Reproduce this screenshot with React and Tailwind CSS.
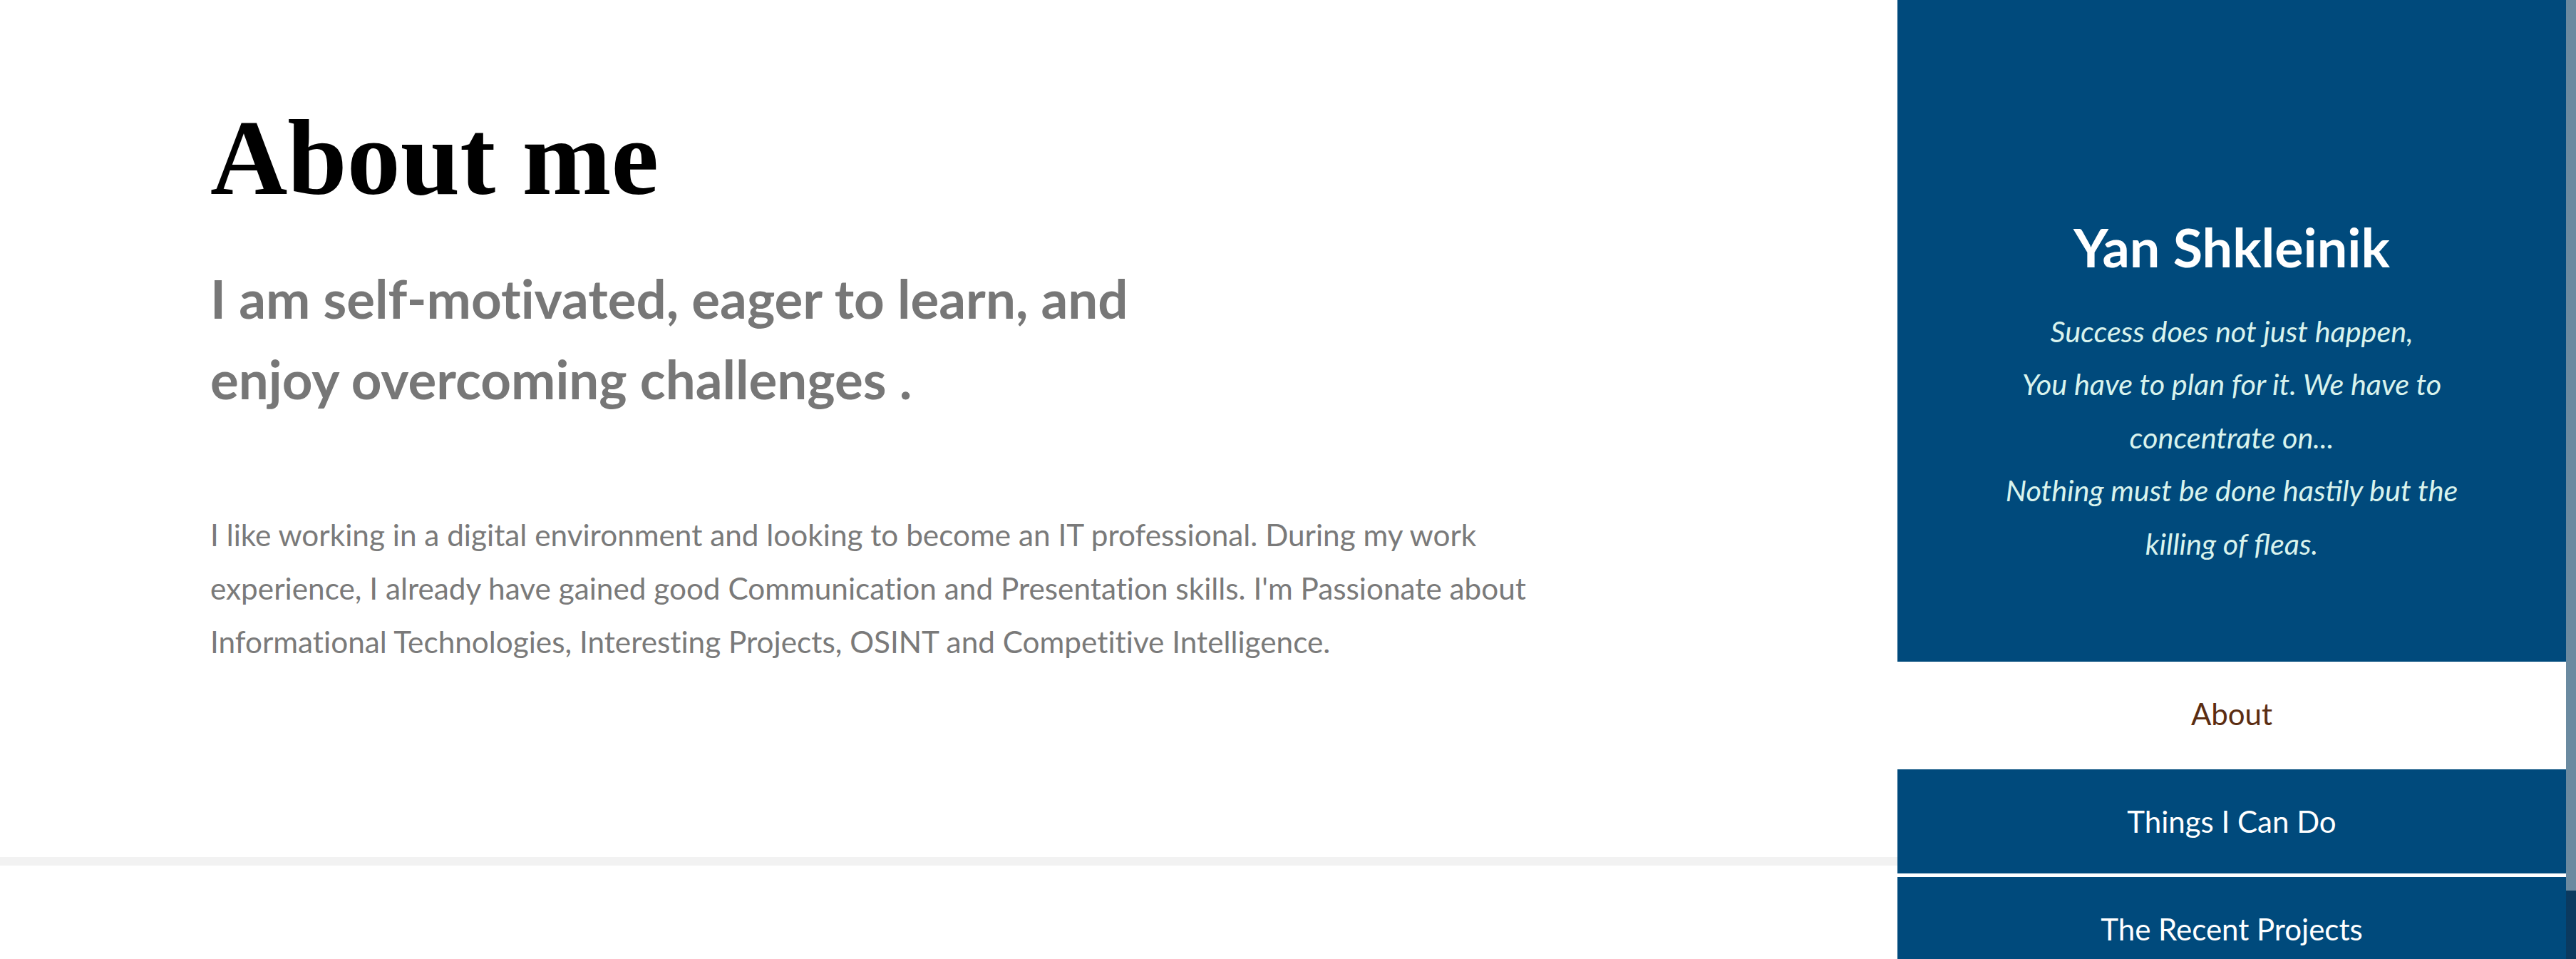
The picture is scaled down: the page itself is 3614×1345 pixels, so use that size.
import React from "react";

const lato = "font-['Lato','Liberation_Sans',sans-serif]";

const NavItem = ({ label, active }) => (
  <div
    className={`h-[151px] shrink-0 border-b-[5px] border-white flex items-center justify-center text-[42px] ${
      active ? "bg-white text-[#5b2d12]" : "bg-[#004a7c] text-white"
    }`}
  >
    {label}
  </div>
);

const App = () => {
  return (
    <div className={`h-[1345px] w-full overflow-hidden flex bg-white ${lato}`}>
      {/* main column */}
      <main className="flex-1 flex flex-col [font-variant-ligatures:no-common-ligatures]">
        <section className="pt-[131px] pb-[265px] pl-[295px]">
          <h1 className="font-['Liberation_Serif','Times_New_Roman',serif] font-bold text-[150px] leading-[1.2] text-black">
            About me
          </h1>
          <h2 className="mt-[51px] max-w-[1400px] text-[74.5px] leading-[113px] font-bold text-[#777777]">
            I am self-motivated, eager to learn, and enjoy overcoming challenges .
          </h2>
          <p className="mt-[124px] max-w-[1960px] text-[42.3px] leading-[75px] text-[#7a7a7a]">
            I like working in a digital environment and looking to become an IT professional. During my work
            experience, I already have gained good Communication and Presentation skills. I'm Passionate about
            Informational Technologies, Interesting Projects, OSINT and Competitive Intelligence.
          </p>
        </section>
        <div className="h-[12px] shrink-0 bg-[#f2f2f2]" />
        <div className="flex-1" />
      </main>

      {/* sidebar */}
      <aside className="w-[938px] shrink-0 flex flex-col bg-[#004a7c]">
        <div className="h-[928px] shrink-0 pt-[301px] flex flex-col items-center text-center">
          <h3 className="text-[75.5px] leading-[1.2] font-bold text-white">Yan Shkleinik</h3>
          <p className="mt-[35px] w-[700px] text-[41.4px] leading-[74.5px] italic text-[#d9f3ed]">
            Success does not just happen,
            <br />
            You have to plan for it. We have to concentrate on...
            <br />
            Nothing must be done hastily but the killing of fleas.
          </p>
        </div>
        <nav className="flex flex-col">
          <NavItem label="About" active />
          <NavItem label="Things I Can Do" />
          <NavItem label="The Recent Projects" />
        </nav>
      </aside>

      {/* scrollbar */}
      <div className="w-[14px] shrink-0 flex flex-col bg-[#0b3a5f]">
        <div className="h-[1249px] bg-[#6b8aa0]" />
      </div>
    </div>
  );
};

export default App;
